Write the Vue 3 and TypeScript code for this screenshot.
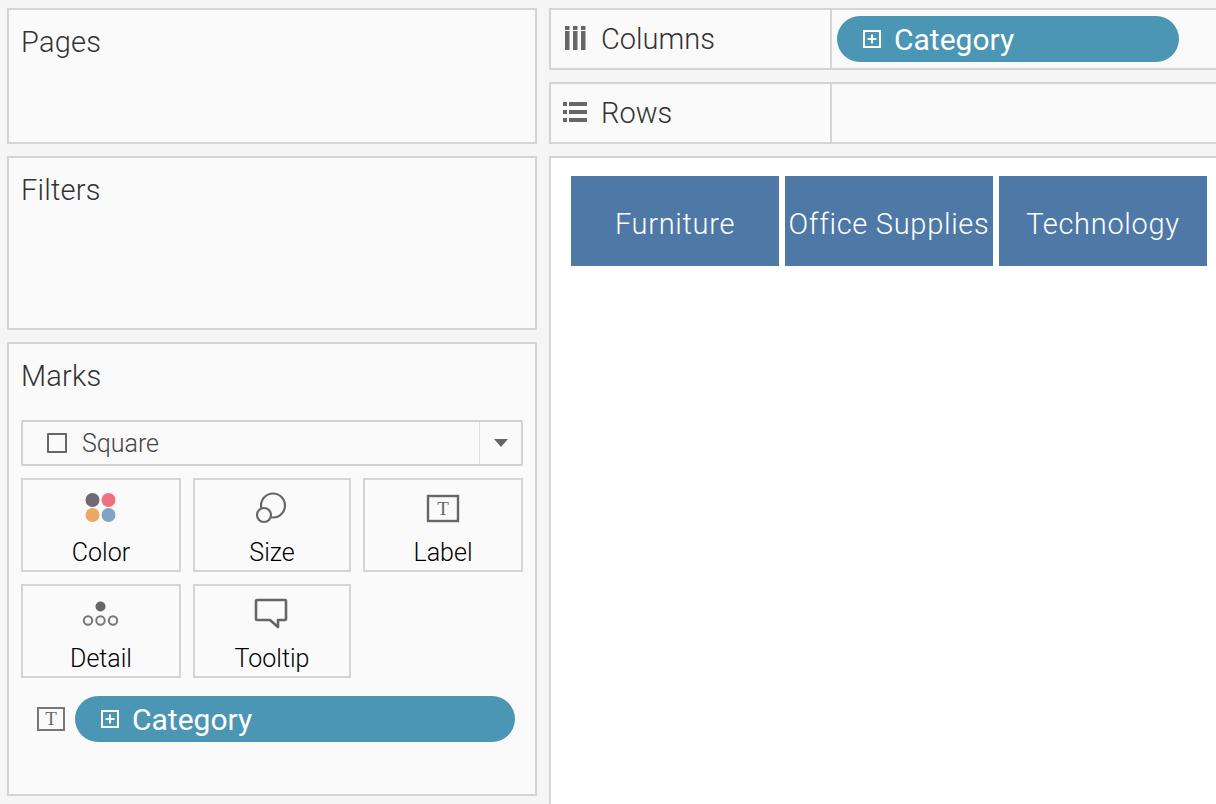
<script setup lang="ts">
const panels = ['Pages', 'Filters']
const cards = ['Color', 'Size', 'Label', 'Detail', 'Tooltip']
const marks = ['Furniture', 'Office Supplies', 'Technology']
</script>

<template>
  <div class="app">
    <aside class="side">
      <section class="panel pages"><h2 class="title">{{ panels[0] }}</h2></section>
      <section class="panel filters"><h2 class="title">{{ panels[1] }}</h2></section>
      <section class="panel marks-card">
        <h2 class="title">Marks</h2>
        <div class="select">
          <div class="select-main">
            <span class="square"></span>
            <span>Square</span>
          </div>
          <div class="select-arrow"><span class="caret"></span></div>
        </div>
        <div class="cards">
          <div v-for="c in cards" :key="c" class="card">
            <svg class="card-icon" width="40" height="36" viewBox="0 0 40 36">
              <g v-if="c === 'Color'">
                <circle cx="11.5" cy="12" r="7" fill="#6e6b73" />
                <circle cx="27.5" cy="12" r="7" fill="#f0707f" />
                <circle cx="11.5" cy="27" r="7" fill="#eda765" />
                <circle cx="27.5" cy="27" r="7" fill="#81a4c4" />
              </g>
              <g v-else-if="c === 'Size'" fill="none" stroke="#666" stroke-width="2.2">
                <circle cx="21" cy="17.5" r="12" />
                <circle cx="12" cy="27" r="7" fill="#fafafa" />
              </g>
              <g v-else-if="c === 'Label'">
                <rect x="5" y="8" width="30" height="25" fill="none" stroke="#666" stroke-width="2.4" />
                <text x="20" y="27" class="t-glyph" text-anchor="middle">T</text>
              </g>
              <g v-else-if="c === 'Detail'">
                <circle cx="19.5" cy="12.5" r="5" fill="#666" />
                <g fill="none" stroke="#777" stroke-width="2">
                  <circle cx="7" cy="26.5" r="4.2" />
                  <circle cx="19.5" cy="26.5" r="4.2" />
                  <circle cx="32" cy="26.5" r="4.2" />
                </g>
              </g>
              <path v-else d="M5 6h28a1 1 0 0 1 1 1v18a1 1 0 0 1-1 1h-7v7l-8-7H5a1 1 0 0 1-1-1V7a1 1 0 0 1 1-1z" fill="none" stroke="#666" stroke-width="2.6" stroke-linejoin="round" />
            </svg>
            <span class="card-name">{{ c }}</span>
          </div>
        </div>
        <div class="shelf-pill">
          <svg class="t-badge" width="28" height="24" viewBox="0 0 28 24">
            <rect x="1" y="1" width="26" height="22" fill="none" stroke="#777" stroke-width="2" />
            <text x="14" y="18" class="t-glyph" text-anchor="middle">T</text>
          </svg>
          <div class="pill pill-wide">
            <svg class="plus" width="18" height="18" viewBox="0 0 18 18">
              <path d="M1 1h16v16H1zM9 4.5v9M4.5 9h9" fill="none" stroke="#fff" stroke-width="2" />
            </svg>
            <span class="pill-text">Category</span>
          </div>
        </div>
      </section>
    </aside>
    <main class="main">
      <div class="shelf">
        <div class="shelf-label">
          <svg class="shelf-icon" width="28" height="26" viewBox="0 0 28 26">
            <path d="M2 0h4.5v4H2zM10 0h4.5v4H10zM18 0h4.5v4H18zM2 5h4.5v19H2zM10 5h4.5v19H10zM18 5h4.5v19H18z" fill="#666" />
          </svg>
          <span>Columns</span>
        </div>
        <div class="shelf-body">
          <div class="pill pill-col">
            <svg class="plus" width="18" height="18" viewBox="0 0 18 18">
              <path d="M1 1h16v16H1zM9 4.5v9M4.5 9h9" fill="none" stroke="#fff" stroke-width="2" />
            </svg>
            <span class="pill-text">Category</span>
          </div>
        </div>
      </div>
      <div class="shelf">
        <div class="shelf-label">
          <svg class="shelf-icon" width="28" height="26" viewBox="0 0 28 26">
            <path d="M0 2h4v4H0zM6 2h18v4H6zM0 10h4v4H0zM6 10h18v4H6zM0 18h4v4H0zM6 18h18v4H6z" fill="#666" />
          </svg>
          <span>Rows</span>
        </div>
        <div class="shelf-body"></div>
      </div>
      <div class="view">
        <div v-for="m in marks" :key="m" class="mark">{{ m }}</div>
      </div>
    </main>
  </div>
</template>

<style>
html, body { margin: 0; padding: 0; overflow: hidden; }
</style>

<style scoped>
.app {
  width: 1216px;
  height: 804px;
  overflow: hidden;
  box-sizing: border-box;
  padding: 8px 0 8px 7px;
  background: #f5f5f5;
  display: grid;
  grid-template-columns: 530px 680px;
  column-gap: 12px;
  font-family: Roboto, "Liberation Sans", sans-serif;
  color: #333;
}
.side { display: flex; flex-direction: column; gap: 12px; height: 788px; }
.panel {
  box-sizing: border-box;
  background: #fafafa;
  border: 2px solid #d4d4d4;
  padding: 0 12px;
}
.pages { height: 136px; }
.filters { height: 174px; }
.marks-card { flex: 1; }
.title {
  margin: 14px 0 0;
  font-size: 29px;
  font-weight: 300;
  line-height: 36px;
  letter-spacing: 0.2px;
  color: #333;
}
.select {
  margin-top: 26px;
  height: 46px;
  box-sizing: border-box;
  border: 2px solid #d0d0d0;
  border-radius: 2px;
  display: flex;
}
.select-main {
  flex: 1;
  display: flex;
  align-items: center;
  gap: 15px;
  padding-left: 24px;
  font-size: 25px;
  font-weight: 300;
  color: #444;
}
.square {
  width: 20px;
  height: 20px;
  box-sizing: border-box;
  border: 2px solid #666;
  border-radius: 1px;
}
.select-arrow {
  width: 40px;
  border-left: 1px solid #e2e2e2;
  display: flex;
  align-items: center;
  justify-content: center;
  margin-left: -1px;
  padding-left: 1px;
}
.caret {
  width: 0;
  height: 0;
  border-left: 7px solid transparent;
  border-right: 7px solid transparent;
  border-top: 8px solid #666;
}
.cards {
  margin-top: 12px;
  display: grid;
  grid-template-columns: 160px 158px 160px;
  grid-auto-rows: 94px;
  column-gap: 12px;
  row-gap: 12px;
}
.card {
  box-sizing: border-box;
  border: 2px solid #d4d4d4;
  display: flex;
  flex-direction: column;
  align-items: center;
}
.card-icon { margin-top: 8px; flex: none; }
.card-name {
  margin-top: 14px;
  font-size: 25px;
  font-weight: 300;
  line-height: 30px;
  color: #000;
}
.t-glyph {
  font-family: "Liberation Serif", serif;
  font-size: 19px;
  fill: #666;
}
.shelf-pill {
  margin-top: 18px;
  display: flex;
  align-items: center;
  gap: 10px;
  padding-left: 16px;
}
.pill {
  height: 46px;
  border-radius: 23px;
  background: #4a96b4;
  color: #fff;
  display: flex;
  align-items: center;
  font-size: 30px;
  box-sizing: border-box;
}
.pill-text { padding-top: 1px; }
.pill-wide { width: 440px; padding-left: 26px; gap: 13px; }
.pill-col { width: 342px; padding-left: 26px; gap: 13px; }
.main { display: flex; flex-direction: column; gap: 12px; }
.shelf {
  height: 62px;
  box-sizing: border-box;
  background: #fafafa;
  border: 2px solid #d4d4d4;
  display: flex;
}
.shelf-label {
  width: 281px;
  box-sizing: border-box;
  border-right: 2px solid #d4d4d4;
  display: flex;
  align-items: center;
  gap: 10px;
  padding-left: 12px;
  font-size: 29px;
  font-weight: 300;
}
.shelf-body { flex: 1; padding-left: 5px; display: flex; align-items: center; }
.view {
  flex: 1;
  background: #fff;
  border: 2px solid #d4d4d4;
  padding: 18px 0 0 20px;
  display: flex;
  align-items: flex-start;
  gap: 6px;
  margin-bottom: -10px;
}
.mark {
  width: 208px;
  height: 90px;
  box-sizing: border-box;
  padding-top: 5px;
  background: #4e79a7;
  color: #fff;
  font-size: 29px;
  font-weight: 300;
  letter-spacing: 0.7px;
  display: flex;
  align-items: center;
  justify-content: center;
  white-space: nowrap;
}
</style>
